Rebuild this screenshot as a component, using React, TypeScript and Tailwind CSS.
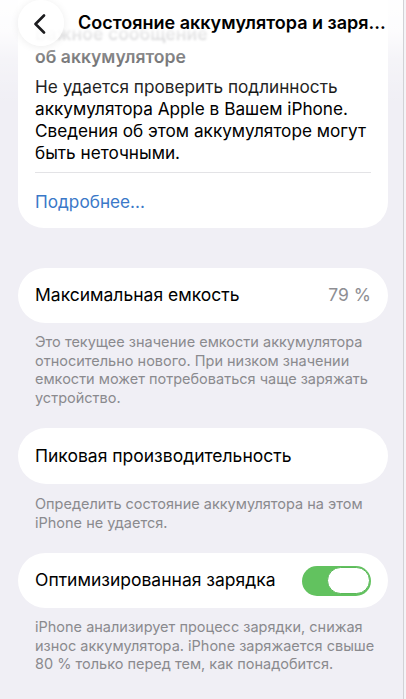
import React from "react";

const font = { fontFamily: "Inter, 'Noto Sans', 'Liberation Sans', sans-serif" };

function Footer({ lines, className = "" }: { lines: string[]; className?: string }) {
  return (
    <div className={"px-[35px] text-[14.5px] leading-[18.5px] text-[#8a8a8e] " + className}>
      {lines.map((l, i) => (
        <div key={i} className="whitespace-nowrap">
          {l}
        </div>
      ))}
    </div>
  );
}

export default function App() {
  return (
    <div className="relative flex h-[699px] w-[406px] overflow-hidden bg-[#f0eff5]" style={font}>
      <div className="relative w-[403px] shrink-0">
        {/* Card 1 */}
        <div className="ml-[18px] w-[370px] rounded-b-[26px] bg-white px-[17px] pt-[22px] pb-[15px]">
          <div className="text-[17.6px] font-semibold leading-[23px] text-[#3a3a3c]">
            <div className="blur-[1.2px] text-[#9a9a9e]">Важное сообщение</div>
            <div>об аккумуляторе</div>
          </div>
          <div className="mt-[8px] text-[17.2px] leading-[22px] text-black">
            <div>Не удается проверить подлинность</div>
            <div>аккумулятора Apple в Вашем iPhone.</div>
            <div>Сведения об этом аккумуляторе могут</div>
            <div>быть неточными.</div>
          </div>
          <div className="mt-[8px] h-px bg-[#e3e3e6]" />
          <div className="mt-[18px] text-[17.2px] leading-[22px] text-[#3a78c8]">Подробнее...</div>
        </div>

        {/* Card 2 */}
        <div className="ml-[18px] mt-[40px] flex h-[55px] w-[370px] items-center justify-between rounded-full bg-white px-[17px] text-[17.5px]">
          <span className="text-black">Максимальная емкость</span>
          <span className="text-[#8e8e93]">79 %</span>
        </div>
        <Footer
          className="pt-[10px]"
          lines={[
            "Это текущее значение емкости аккумулятора",
            "относительно нового. При низком значении",
            "емкости может потребоваться чаще заряжать",
            "устройство.",
          ]}
        />

        {/* Card 3 */}
        <div className="ml-[18px] mt-[21px] flex h-[56px] w-[370px] items-center rounded-full bg-white px-[17px] text-[17.5px] text-black">
          Пиковая производительность
        </div>
        <Footer
          className="pt-[11px]"
          lines={["Определить состояние аккумулятора на этом", "iPhone не удается."]}
        />

        {/* Card 4 */}
        <div className="ml-[18px] mt-[21px] flex h-[55px] w-[370px] items-center justify-between rounded-full bg-white pl-[17px] pr-[17px] text-[17.5px] text-black">
          <span>Оптимизированная зарядка</span>
          <div className="flex h-[30px] w-[69px] items-center justify-end rounded-full bg-[#62c25f] pr-px">
            <div className="h-[27px] w-[43px] rounded-full border-[1.5px] border-[#5cb85a] bg-white" />
          </div>
        </div>
        <Footer
          className="pt-[10px]"
          lines={[
            "iPhone анализирует процесс зарядки, снижая",
            "износ аккумулятора. iPhone заряжается свыше",
            "80 % только перед тем, как понадобится.",
          ]}
        />

        {/* Header overlay */}
        <div className="absolute inset-x-0 top-0 h-[105px] bg-[linear-gradient(to_bottom,rgba(255,255,255,0.97)_0%,rgba(255,255,255,0.85)_28%,rgba(255,255,255,0.35)_55%,rgba(255,255,255,0)_100%)]" />
        <div className="absolute left-[18px] top-0 flex h-[46px] w-[46px] items-center justify-center rounded-full bg-white/80 shadow-[0_1px_8px_rgba(0,0,0,0.08)]">
          <svg width="14" height="20" viewBox="0 0 14 20" className="ml-[-3px] mt-[2px]">
            <path d="M11 1.5 L2.5 10 L11 18.5" fill="none" stroke="#1c1c1e" strokeWidth="2.6" strokeLinecap="round" strokeLinejoin="round" />
          </svg>
        </div>
        <div className="absolute left-[78px] top-[11px] whitespace-nowrap text-[18px] font-semibold leading-[24px] text-black">
          Состояние аккумулятора и заря...
        </div>
      </div>
      <div className="w-px shrink-0 bg-[#d2d2d6]" />
      <div className="w-[2px] shrink-0 bg-[#f4f4f7]" />
    </div>
  );
}
